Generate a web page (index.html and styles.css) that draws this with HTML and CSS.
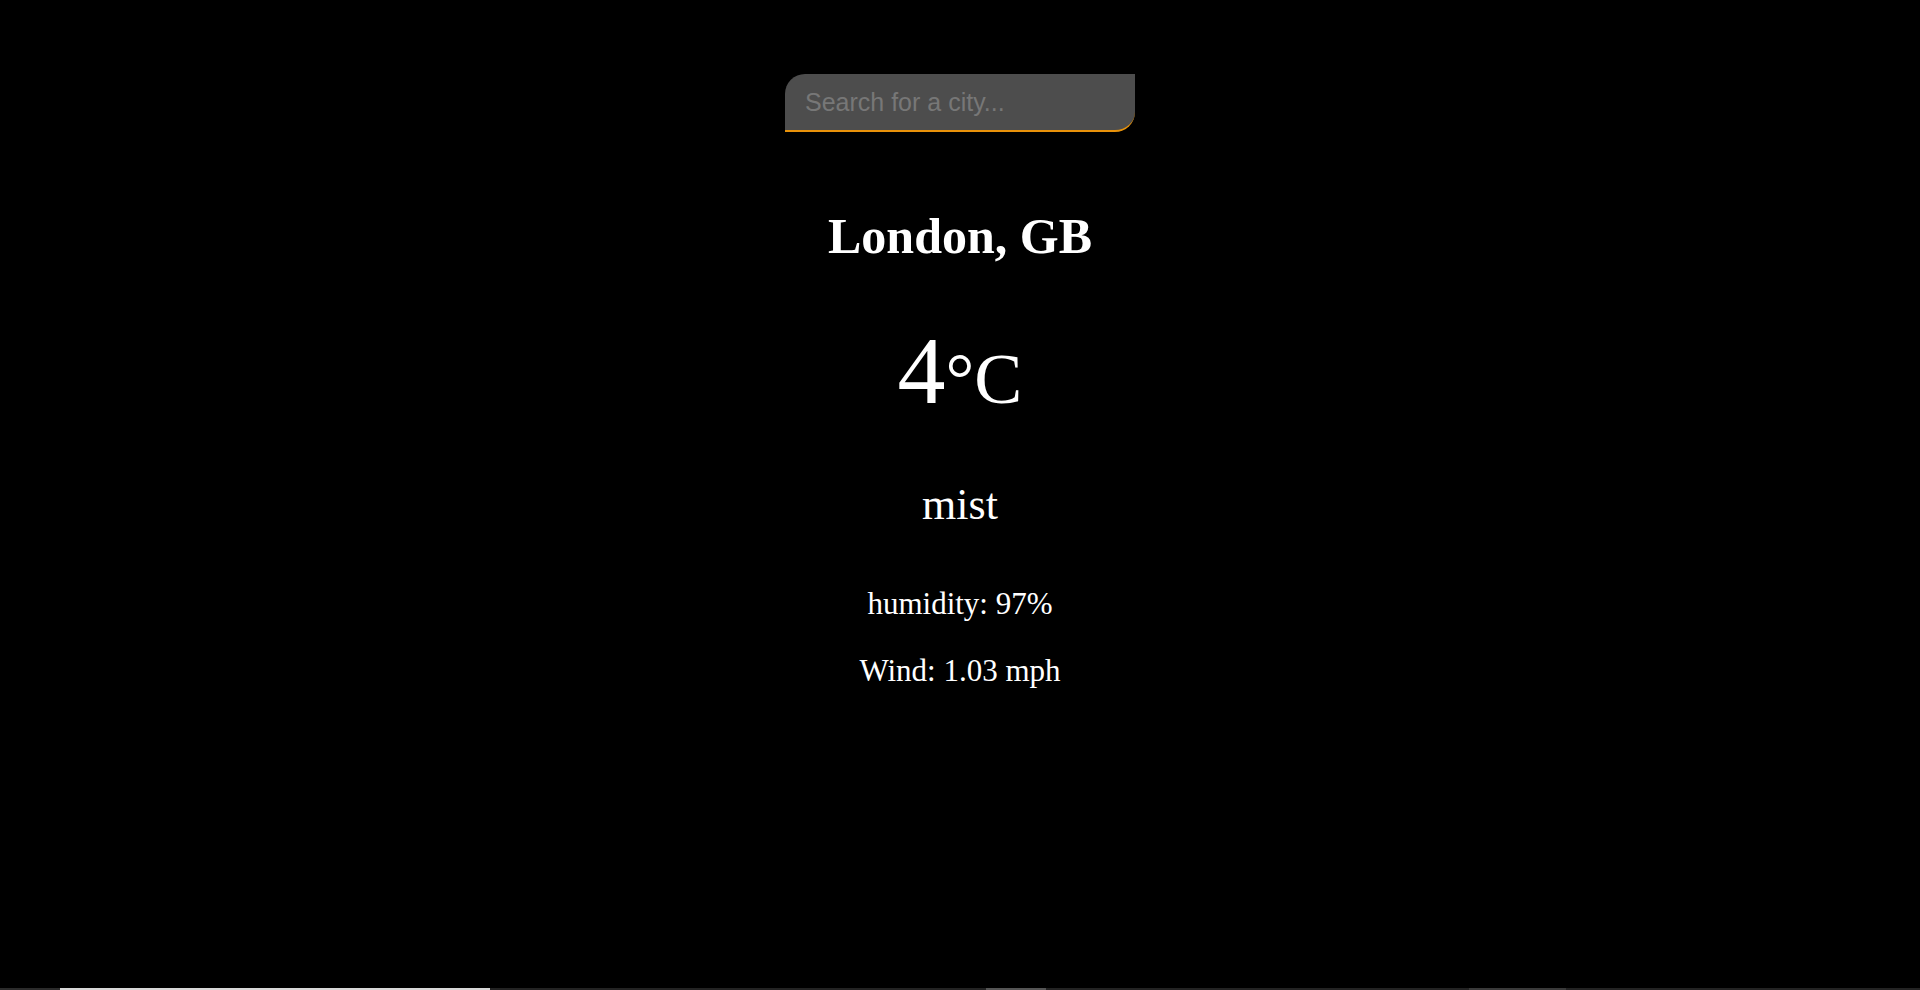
FILE: index.html
```html
<!DOCTYPE html>
<html lang="en">
<head>
<meta charset="utf-8">
<title>Weather</title>
<link rel="stylesheet" href="styles.css">
</head>
<body>
<main class="app">
  <input class="search" type="text" placeholder="Search for a city...">
  <h1 class="city">London, GB</h1>
  <div class="temp">4<span class="unit">°C</span></div>
  <div class="desc">mist</div>
  <div class="stat humidity">humidity: 97%</div>
  <div class="stat wind">Wind: 1.03 mph</div>
</main>
<footer class="strip">
  <span class="seg s1"></span>
  <span class="seg s2"></span>
  <span class="seg s3"></span>
  <span class="seg s4"></span>
  <span class="seg s5"></span>
  <span class="seg s6"></span>
  <span class="seg s7"></span>
</footer>
</body>
</html>
```
FILE: styles.css
```css
html, body {
  margin: 0;
  padding: 0;
  background: #000;
}
body {
  min-height: 100vh;
  display: flex;
  flex-direction: column;
  font-family: "Liberation Serif", "Times New Roman", serif;
  color: #fff;
}
.app {
  flex: 1;
  display: flex;
  flex-direction: column;
  align-items: center;
  padding-top: 74px;
}
.search {
  box-sizing: border-box;
  width: 350px;
  height: 58px;
  padding: 0 20px;
  font-family: "Liberation Sans", Arial, sans-serif;
  font-size: 25px;
  color: #fff;
  background: #4d4d4d;
  border: none;
  border-bottom: 2px solid #e8920a;
  border-radius: 20px 0 20px 0;
  outline: none;
}
.search::placeholder {
  color: #777;
}
.city {
  margin: 74px 0 0;
  font-size: 50px;
  line-height: 60px;
  font-weight: bold;
}
.temp {
  margin-top: 50px;
  font-size: 96px;
  line-height: 110px;
}
.unit {
  font-size: 72px;
  line-height: 1;
}
.desc {
  margin-top: 54px;
  font-size: 44px;
  line-height: 50px;
}
.stat {
  font-size: 31px;
  line-height: 36px;
}
.humidity {
  margin-top: 56px;
}
.wind {
  margin-top: 31px;
}
.strip {
  display: flex;
  height: 2px;
  background: #222;
}
.seg { display: block; height: 2px; }
.s1 { width: 60px; background: #2b2b2b; }
.s2 { width: 430px; background: #d8d8d8; }
.s3 { width: 496px; background: #232323; }
.s4 { width: 60px; background: #555; }
.s5 { width: 423px; background: #232323; }
.s6 { width: 97px; background: #3a3a3a; }
.s7 { flex: 1; background: #232323; }
```
